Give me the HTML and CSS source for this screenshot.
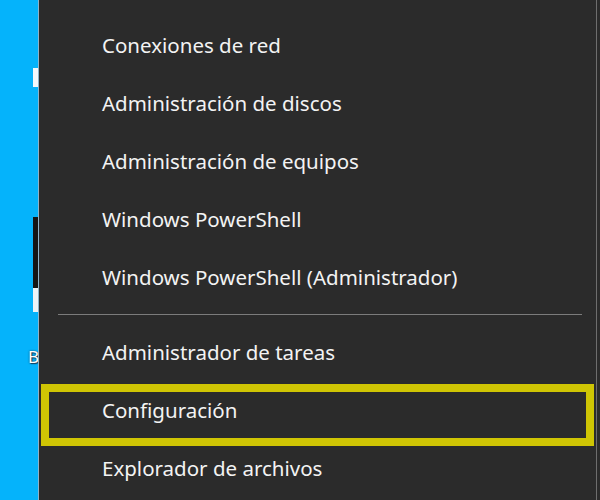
FILE: index.html
```html
<!DOCTYPE html>
<html lang="es">
<head>
<meta charset="utf-8">
<title>Menú</title>
<link rel="stylesheet" href="styles.css">
</head>
<body>
<div class="screen">
  <div class="desktop">
    <div class="dk dk-white1"></div>
    <div class="dk dk-dark"></div>
    <div class="dk dk-white2"></div>
    <div class="dk-label">B</div>
  </div>
  <nav class="menu">
    <ul class="list">
      <li class="item">Administrador de dispositivos</li>
      <li class="item">Conexiones de red</li>
      <li class="item">Administración de discos</li>
      <li class="item">Administración de equipos</li>
      <li class="item">Windows PowerShell</li>
      <li class="item">Windows PowerShell (Administrador)</li>
    </ul>
    <div class="sep"><div class="sep-line"></div></div>
    <ul class="list">
      <li class="item">Administrador de tareas</li>
      <li class="item item-highlight">Configuración</li>
      <li class="item">Explorador de archivos</li>
    </ul>
  </nav>
</div>
</body>
</html>
```

FILE: styles.css
```css
html, body {
  margin: 0;
  padding: 0;
}
body {
  width: 600px;
  height: 500px;
  overflow: hidden;
  background: #05b3fb;
  font-family: "Noto Sans", "Open Sans", "Liberation Sans", sans-serif;
}
.screen {
  display: flex;
  width: 600px;
  height: 500px;
}
.desktop {
  position: relative;
  width: 38px;
  flex: none;
  background: #05b3fb;
  overflow: hidden;
}
.dk {
  position: absolute;
  left: 33px;
  width: 6px;
}
.dk-white1 {
  top: 68px;
  height: 19px;
  background: #f4f8fb;
}
.dk-dark {
  top: 217px;
  height: 71px;
  background: #151515;
}
.dk-white2 {
  top: 288px;
  height: 24px;
  background: #eef3f7;
}
.dk-label {
  position: absolute;
  left: 28px;
  top: 345px;
  font-size: 17px;
  color: #ffffff;
  text-shadow: 0 0 2px #1a3a55, 1px 1px 1px #1a3a55;
}
.menu {
  flex: 1;
  background: #2b2b2b;
  border-left: 1px solid #8fb2c8;
  box-shadow: inset -3px 0 0 #2b2b2b, inset -4px 0 0 #6e6e6e;
  overflow: hidden;
}
.list {
  list-style: none;
  margin: 0;
  padding: 0;
}
.list:first-child {
  margin-top: -42px;
}
.item {
  position: relative;
  height: 58px;
  line-height: 58px;
  padding-left: 63px;
  font-size: 20.5px;
  color: #f3f3f3;
  white-space: nowrap;
}
.sep {
  padding: 8px 18px 8px 19px;
}
.sep-line {
  height: 1px;
  background: #7c7c7c;
}
.item-highlight::after {
  content: "";
  position: absolute;
  left: 2px;
  right: 6px;
  top: 3px;
  bottom: -7px;
  border: 8px solid #cfc504;
}
```
